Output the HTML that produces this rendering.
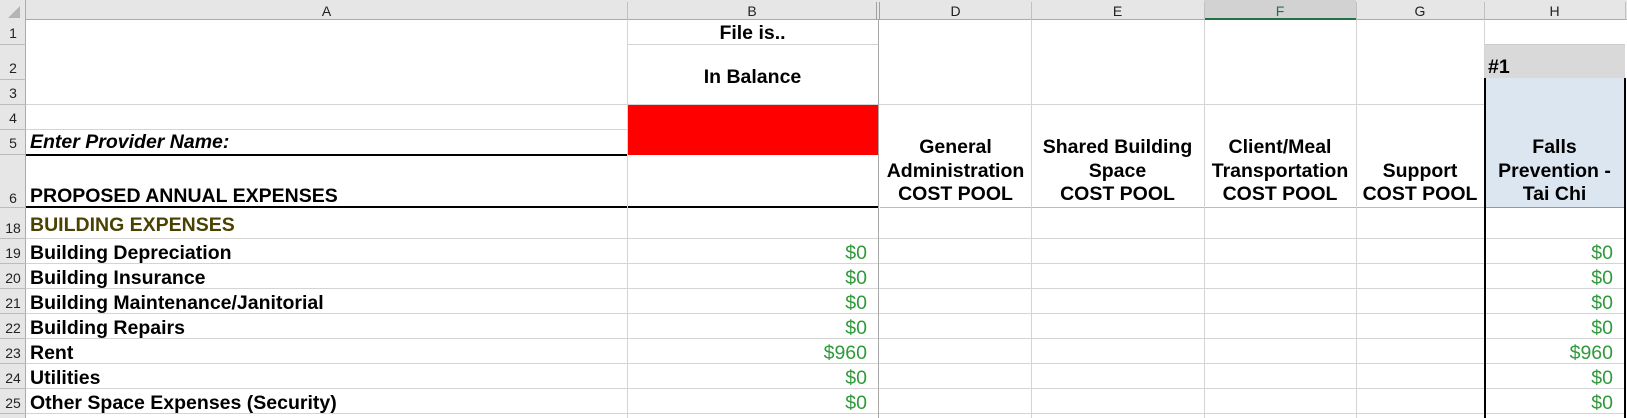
<!DOCTYPE html>
<html><head><meta charset="utf-8"><style>
*{margin:0;padding:0;box-sizing:border-box}
body{width:1627px;height:418px;overflow:hidden;background:#fff;position:relative;font-family:"Liberation Sans",Arial,sans-serif}
.a{position:absolute}
.hl{position:absolute;height:1px;background:#d4d4d4}
.vl{position:absolute;width:1px;background:#d4d4d4}
.ch{position:absolute;top:0;height:20px;font-size:14px;color:#222;text-align:center;line-height:22px}
.rn{position:absolute;left:0;width:26px;font-size:14px;color:#222;text-align:center}
.t{position:absolute;font-size:19.5px;font-weight:bold;color:#000;white-space:nowrap;line-height:22px}
.g{position:absolute;font-size:19.5px;color:#2e9a3a;text-align:right;white-space:nowrap;line-height:22px}
.hd{position:absolute;font-size:19.5px;font-weight:bold;text-align:center;line-height:23.5px;white-space:nowrap}
</style></head><body>
<div class="a" style="left:0;top:0;width:1627px;height:20px;background:#e6e6e6;border-bottom:1px solid #ababab"></div>
<div class="a" style="left:0;top:0;width:26px;height:418px;background:#e6e6e6;border-right:1px solid #ababab"></div>
<div class="a" style="left:8px;top:6px;width:0;height:0;border-left:12px solid transparent;border-bottom:12px solid #b4b4b4"></div>
<div class="a" style="left:1204px;top:0;width:152px;height:20px;background:#d2d2d2;border-bottom:2px solid #217346"></div>
<div class="a" style="left:627px;top:2px;width:1px;height:18px;background:#c0c0c0"></div>
<div class="a" style="left:876px;top:2px;width:1px;height:18px;background:#a0a0a0"></div>
<div class="a" style="left:879px;top:2px;width:1px;height:18px;background:#a0a0a0"></div>
<div class="a" style="left:1031px;top:2px;width:1px;height:18px;background:#c0c0c0"></div>
<div class="a" style="left:1204px;top:2px;width:1px;height:18px;background:#c0c0c0"></div>
<div class="a" style="left:1356px;top:2px;width:1px;height:18px;background:#c0c0c0"></div>
<div class="a" style="left:1484px;top:2px;width:1px;height:18px;background:#c0c0c0"></div>
<div class="a" style="left:1625px;top:2px;width:1px;height:18px;background:#c0c0c0"></div>
<div class="ch" style="left:26px;width:601px">A</div>
<div class="ch" style="left:627px;width:250px">B</div>
<div class="ch" style="left:880px;width:151px">D</div>
<div class="ch" style="left:1031px;width:173px">E</div>
<div class="ch" style="left:1204px;width:152px;color:#217346">F</div>
<div class="ch" style="left:1356px;width:128px">G</div>
<div class="ch" style="left:1484px;width:141px">H</div>

<div class="a" style="left:627px;top:104px;width:251px;height:51px;background:#ff0000"></div>
<div class="a" style="left:1484px;top:44px;width:141px;height:34px;background:#d9d9d9"></div>
<div class="a" style="left:1484px;top:78px;width:141px;height:130px;background:#dce6f1"></div>

<div class="hl" style="left:627px;top:44px;width:251px"></div>
<div class="hl" style="left:1484px;top:44px;width:141px;background:#ccc"></div>
<div class="hl" style="left:26px;top:104px;width:1458px"></div>
<div class="hl" style="left:26px;top:129px;width:601px"></div>
<div class="hl" style="left:880px;top:207px;width:604px;background:#bbb"></div>
<div class="hl" style="left:1484px;top:207px;width:141px;background:#999"></div>
<div class="a" style="left:26px;top:154px;width:601px;height:1.5px;background:#000"></div>
<div class="a" style="left:26px;top:206px;width:852px;height:2px;background:#000"></div>
<div class="hl" style="left:26px;top:238px;width:1600px"></div>
<div class="hl" style="left:26px;top:263px;width:1600px"></div>
<div class="hl" style="left:26px;top:288px;width:1600px"></div>
<div class="hl" style="left:26px;top:313px;width:1600px"></div>
<div class="hl" style="left:26px;top:338px;width:1600px"></div>
<div class="hl" style="left:26px;top:363px;width:1600px"></div>
<div class="hl" style="left:26px;top:388px;width:1600px"></div>
<div class="hl" style="left:26px;top:413px;width:1600px"></div>
<div class="hl" style="left:0;top:44px;width:26px;background:#bbb"></div>
<div class="hl" style="left:0;top:79px;width:26px;background:#bbb"></div>
<div class="hl" style="left:0;top:104px;width:26px;background:#bbb"></div>
<div class="hl" style="left:0;top:129px;width:26px;background:#bbb"></div>
<div class="hl" style="left:0;top:154px;width:26px;background:#bbb"></div>
<div class="hl" style="left:0;top:207px;width:26px;background:#bbb"></div>
<div class="hl" style="left:0;top:238px;width:26px;background:#bbb"></div>
<div class="hl" style="left:0;top:263px;width:26px;background:#bbb"></div>
<div class="hl" style="left:0;top:288px;width:26px;background:#bbb"></div>
<div class="hl" style="left:0;top:313px;width:26px;background:#bbb"></div>
<div class="hl" style="left:0;top:338px;width:26px;background:#bbb"></div>
<div class="hl" style="left:0;top:363px;width:26px;background:#bbb"></div>
<div class="hl" style="left:0;top:388px;width:26px;background:#bbb"></div>
<div class="hl" style="left:0;top:413px;width:26px;background:#bbb"></div>

<div class="vl" style="left:627px;top:20px;height:398px"></div>
<div class="vl" style="left:878px;top:20px;height:398px;background:#a8a8a8"></div>
<div class="vl" style="left:1031px;top:20px;height:398px"></div>
<div class="vl" style="left:1204px;top:20px;height:398px"></div>
<div class="vl" style="left:1356px;top:20px;height:398px"></div>
<div class="vl" style="left:1484px;top:20px;height:58px"></div>
<div class="a" style="left:1484px;top:78px;width:1.5px;height:340px;background:#000"></div>
<div class="a" style="left:1624px;top:78px;width:1.5px;height:340px;background:#000"></div>

<div class="rn" style="top:25px">1</div>
<div class="rn" style="top:60px">2</div>
<div class="rn" style="top:85px">3</div>
<div class="rn" style="top:110px">4</div>
<div class="rn" style="top:135px">5</div>
<div class="rn" style="top:190px">6</div>
<div class="rn" style="top:220px">18</div>
<div class="rn" style="top:245px">19</div>
<div class="rn" style="top:270px">20</div>
<div class="rn" style="top:295px">21</div>
<div class="rn" style="top:320px">22</div>
<div class="rn" style="top:345px">23</div>
<div class="rn" style="top:370px">24</div>
<div class="rn" style="top:395px">25</div>

<div class="t" style="left:627px;width:251px;text-align:center;top:22px">File is..</div>
<div class="t" style="left:627px;width:251px;text-align:center;top:66px">In Balance</div>
<div class="t" style="left:1488px;top:56px">#1</div>
<div class="t" style="left:30px;top:131px;font-style:italic">Enter Provider Name:</div>
<div class="t" style="left:30px;top:185px">PROPOSED ANNUAL EXPENSES</div>
<div class="t" style="left:30px;top:214px;color:#4a4200">BUILDING EXPENSES</div>
<div class="t" style="left:30px;top:242px">Building Depreciation</div>
<div class="t" style="left:30px;top:267px">Building Insurance</div>
<div class="t" style="left:30px;top:292px">Building Maintenance/Janitorial</div>
<div class="t" style="left:30px;top:317px">Building Repairs</div>
<div class="t" style="left:30px;top:342px">Rent</div>
<div class="t" style="left:30px;top:367px">Utilities</div>
<div class="t" style="left:30px;top:392px">Other Space Expenses (Security)</div>

<div class="hd" style="left:880px;width:151px;top:136px">General<br>Administration<br>COST POOL</div>
<div class="hd" style="left:1031px;width:173px;top:136px">Shared Building<br>Space<br>COST POOL</div>
<div class="hd" style="left:1204px;width:152px;top:136px">Client/Meal<br>Transportation<br>COST POOL</div>
<div class="hd" style="left:1356px;width:128px;top:159.5px">Support<br>COST POOL</div>
<div class="hd" style="left:1484px;width:141px;top:136px">Falls<br>Prevention -<br>Tai Chi</div>

<div class="g" style="left:627px;width:240px;top:242px">$0</div>
<div class="g" style="left:627px;width:240px;top:267px">$0</div>
<div class="g" style="left:627px;width:240px;top:292px">$0</div>
<div class="g" style="left:627px;width:240px;top:317px">$0</div>
<div class="g" style="left:627px;width:240px;top:342px">$960</div>
<div class="g" style="left:627px;width:240px;top:367px">$0</div>
<div class="g" style="left:627px;width:240px;top:392px">$0</div>
<div class="g" style="left:1484px;width:129px;top:242px">$0</div>
<div class="g" style="left:1484px;width:129px;top:267px">$0</div>
<div class="g" style="left:1484px;width:129px;top:292px">$0</div>
<div class="g" style="left:1484px;width:129px;top:317px">$0</div>
<div class="g" style="left:1484px;width:129px;top:342px">$960</div>
<div class="g" style="left:1484px;width:129px;top:367px">$0</div>
<div class="g" style="left:1484px;width:129px;top:392px">$0</div>
</body></html>
